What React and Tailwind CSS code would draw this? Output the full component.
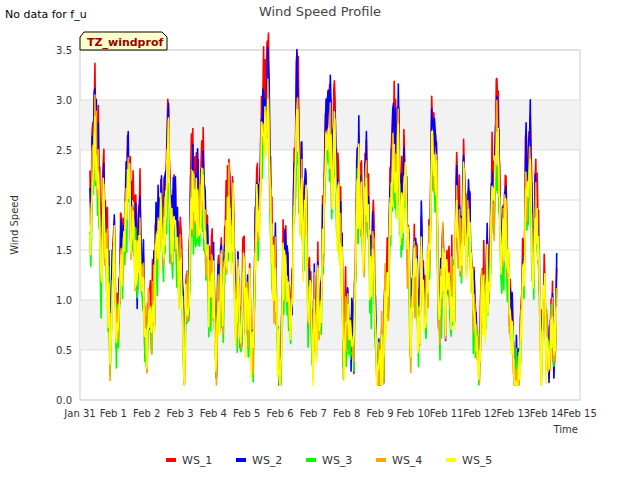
import React from 'react';

const X0 = 80, X1 = 580, Y0 = 50, Y1 = 400;
const dayW = (X1 - X0) / 15;
const yOf = (v) => Y1 - v * 100;

function rng(seed) {
  let s = seed;
  return () => {
    s = (s * 1103515245 + 12345) % 2147483648;
    return s / 2147483648;
  };
}

const base = (() => {
  const r = rng(7);
  const pts = [];
  let v = 1.8;
  for (let i = 0; i <= 14 * 48; i++) {
    const t = i / 48;
    const target = 1.5 + 0.7 * Math.sin(t * 2 * Math.PI * 1.0 + 0.5);
    v += (target - v) * 0.25 + (r() - 0.5) * 0.9;
    v = Math.max(0.2, Math.min(3.3, v));
    pts.push([t, v]);
  }
  return pts;
})();

const series = [
  { name: 'WS_1', color: '#ff0000', off: 0.12, seed: 1 },
  { name: 'WS_2', color: '#0000ff', off: 0.07, seed: 2 },
  { name: 'WS_3', color: '#00ff00', off: -0.12, seed: 3 },
  { name: 'WS_4', color: '#ffa500', off: -0.03, seed: 4 },
  { name: 'WS_5', color: '#ffff00', off: -0.05, seed: 5 },
];

function pathFor(s) {
  const r = rng(s.seed * 97);
  return base
    .map(([t, v]) => {
      const val = Math.max(0.15, v * (1 + s.off) + (r() - 0.5) * 0.5);
      return `${(X0 + dayW * 0.3 + t * dayW).toFixed(1)},${yOf(val).toFixed(1)}`;
    })
    .join(' ');
}

const xLabels = ['Jan 31', 'Feb 1', 'Feb 2', 'Feb 3', 'Feb 4', 'Feb 5', 'Feb 6', 'Feb 7', 'Feb 8', 'Feb 9', 'Feb 10', 'Feb 11', 'Feb 12', 'Feb 13', 'Feb 14', 'Feb 15'];
const yLabels = ['0.0', '0.5', '1.0', '1.5', '2.0', '2.5', '3.0', '3.5'];

export default function App() {
  return (
    <div className="w-[640px] h-[480px] bg-white font-['DejaVu_Sans',sans-serif]">
      <svg width="640" height="480" fontFamily="DejaVu Sans, sans-serif">
        <text x="5" y="18" fontSize="11" fill="#000">No data for f_u</text>
        <text x="320" y="16" fontSize="13" fill="#444" textAnchor="middle">Wind Speed Profile</text>
        <rect x={X0} y={Y0} width={X1 - X0} height={Y1 - Y0} fill="#fff" stroke="#ccc" />
        <rect x={X0} y={yOf(3)} width={X1 - X0} height={50} fill="#f2f2f2" />
        <rect x={X0} y={yOf(1)} width={X1 - X0} height={50} fill="#f2f2f2" />
        {yLabels.map((l, i) => (
          <g key={l}>
            <line x1={X0} x2={X1} y1={yOf(i * 0.5)} y2={yOf(i * 0.5)} stroke="#ddd" />
            <text x={X0 - 8} y={yOf(i * 0.5) + 4} fontSize="10" fill="#333" textAnchor="end">{l}</text>
          </g>
        ))}
        {xLabels.map((l, i) => (
          <text key={l} x={X0 + i * dayW} y={Y1 + 17} fontSize="10" fill="#333" textAnchor="middle">{l}</text>
        ))}
        {series.map((s) => (
          <polyline key={s.name} points={pathFor(s)} fill="none" stroke={s.color} strokeWidth="1.6" strokeLinejoin="round" />
        ))}
        <text x="578" y="433" fontSize="10" fill="#333" textAnchor="end">Time</text>
        <text x="18" y="225" fontSize="10" fill="#333" textAnchor="middle" transform="rotate(-90 18 225)">Wind Speed</text>
        <path d="M84,32 L162,32 L167,37 L167,50 L80,50 L80,37 Z" fill="#ffffcc" stroke="#000" />
        <text x="87" y="46" fontSize="11" fontWeight="bold" fill="#990000">TZ_windprof</text>
        {series.map((s, i) => (
          <g key={s.name}>
            <rect x={166 + i * 70} y={458} width={10} height={4} fill={s.color} />
            <text x={182 + i * 70} y={464} fontSize="11" fill="#333">{s.name}</text>
          </g>
        ))}
      </svg>
    </div>
  );
}
